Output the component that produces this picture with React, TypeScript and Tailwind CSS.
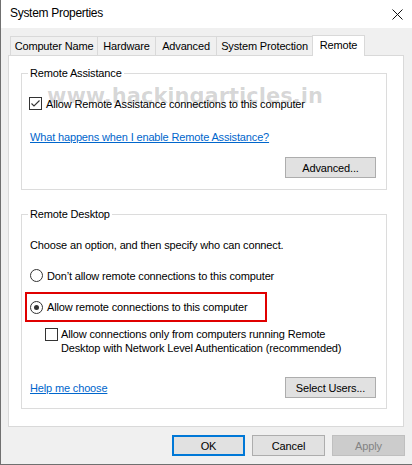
import React from "react";

function Check({ checked }: { checked?: boolean }) {
  return (
    <div className="w-[13px] h-[13px] shrink-0 border border-[#333333] bg-white flex items-center justify-center">
      {checked && (
        <svg width="11" height="11" viewBox="0 0 11 11">
          <polyline points="1.5,5.5 4,8 9.5,2.5" fill="none" stroke="#333333" strokeWidth="1.1" />
        </svg>
      )}
    </div>
  );
}

function Radio({ checked }: { checked?: boolean }) {
  return (
    <div className="w-[13px] h-[13px] shrink-0 rounded-full border border-[#333333] bg-white flex items-center justify-center">
      {checked && <div className="w-[5px] h-[5px] rounded-full bg-[#333333]" />}
    </div>
  );
}

function Btn({ children, w, cls }: { children: React.ReactNode; w: string; cls?: string }) {
  return (
    <div
      className={`${w} h-[21px] flex items-center justify-center ${
        cls ?? "bg-[#e1e1e1] border border-[#adadad] text-black"
      }`}
    >
      {children}
    </div>
  );
}

export default function App() {
  return (
    <div className="relative w-[412px] h-[465px] bg-[#f0f0f0] border-l border-b border-[#707070] flex flex-col font-['Liberation_Sans',Arial,sans-serif] text-[11px] tracking-[-0.15px] leading-[16px] text-black overflow-hidden">
      {/* Title bar */}
      <div className="h-[28px] bg-white flex items-center justify-between pl-[9px] pr-[9px] pb-[3px] shrink-0">
        <span className="text-[12px] tracking-[-0.3px]">System Properties</span>
        <svg width="11" height="11" viewBox="0 0 11 11" className="mt-[3px]">
          <path d="M0.5 0.5 L10.5 10.5 M10.5 0.5 L0.5 10.5" stroke="#111" strokeWidth="1" />
        </svg>
      </div>

      {/* Tabs */}
      <div className="mt-[7px] ml-[9px] h-[20px] flex items-end shrink-0">
        <div className="w-[88px] h-[19px] border border-b-0 border-[#d9d9d9] flex items-center justify-center">Computer Name</div>
        <div className="-ml-px w-[59px] h-[19px] border border-b-0 border-[#d9d9d9] flex items-center justify-center">Hardware</div>
        <div className="-ml-px w-[62px] h-[19px] border border-b-0 border-[#d9d9d9] flex items-center justify-center">Advanced</div>
        <div className="-ml-px w-[97px] h-[19px] border border-b-0 border-[#d9d9d9] flex items-center justify-center">System Protection</div>
        <div className="-ml-px w-[53px] h-[21px] -mb-px relative z-10 bg-white border border-b-0 border-[#d9d9d9] flex items-center justify-center pb-[2px]">Remote</div>
      </div>

      {/* Panel */}
      <div className="ml-[7px] w-[396px] h-[372px] bg-white border border-[#d9d9d9] pl-[12px] pr-[16px] pt-[17px] shrink-0">
        {/* Remote Assistance */}
        <div className="relative h-[117px] border border-[#dcdcdc] flex flex-col">
          <span className="absolute -top-[9px] left-[6px] bg-white px-[2px]">Remote Assistance</span>
          <div className="mt-[23px] h-[13px] pl-[7px] flex items-center gap-[4px]">
            <Check checked />
            <span>Allow Remote Assistance connections to this computer</span>
          </div>
          <div className="mt-[19px] h-[16px] pl-[8px] flex items-center">
            <span className="text-[#0066cc] underline">What happens when I enable Remote Assistance?</span>
          </div>
          <div className="mt-[12px] self-end mr-[10px]">
            <Btn w="w-[91px]">Advanced...</Btn>
          </div>
        </div>

        {/* Remote Desktop */}
        <div className="relative mt-[24px] h-[195px] border border-[#dcdcdc] flex flex-col">
          <span className="absolute -top-[9px] left-[6px] bg-white px-[2px]">Remote Desktop</span>
          <div className="mt-[22px] h-[16px] pl-[8px] flex items-center">
            <span>Choose an option, and then specify who can connect.</span>
          </div>
          <div className="mt-[16px] h-[13px] pl-[8px] flex items-center gap-[4px]">
            <Radio />
            <span>Don’t allow remote connections to this computer</span>
          </div>
          <div className="mt-[10px] ml-[3px] w-[242px] h-[30px] border-2 border-[#e00000] pl-[3px] flex items-center gap-[4px]">
            <Radio checked />
            <span>Allow remote connections to this computer</span>
          </div>
          <div className="mt-[5px] ml-[23px] flex items-start gap-[3px] leading-[14px]">
            <div className="mt-[1px]">
              <Check />
            </div>
            <span>
              Allow connections only from computers running Remote
              <br />
              Desktop with Network Level Authentication (recommended)
            </span>
          </div>
          <div className="mt-[22px] h-[21px] pl-[8px] pr-[10px] flex items-center justify-between">
            <span className="text-[#0066cc] underline">Help me choose</span>
            <Btn w="w-[91px]">Select Users...</Btn>
          </div>
        </div>
      </div>

      {/* Bottom buttons */}
      <div className="mt-[8px] pr-[7px] flex justify-end gap-[7px] shrink-0">
        <Btn w="w-[73px]" cls="bg-[#e1e1e1] border-2 border-[#0078d7] text-black">OK</Btn>
        <Btn w="w-[73px]">Cancel</Btn>
        <Btn w="w-[73px]" cls="bg-[#cccccc] border border-[#bfbfbf] text-[#838383]">Apply</Btn>
      </div>

      {/* Watermark overlay */}
      <div className="pointer-events-none absolute left-[46px] top-[86px] font-['DejaVu_Sans',sans-serif] font-bold text-[21px] leading-[21px] tracking-normal text-[rgba(0,0,0,0.17)] whitespace-nowrap">
        www.hackingarticles.in
      </div>
    </div>
  );
}
